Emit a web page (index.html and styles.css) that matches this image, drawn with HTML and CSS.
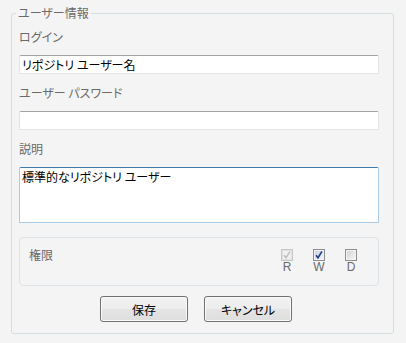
FILE: index.html
```html
<!DOCTYPE html>
<html lang="ja">
<head>
<meta charset="utf-8">
<title>ユーザー情報</title>
<link rel="stylesheet" href="styles.css">
</head>
<body>
<fieldset class="panel">
  <legend class="panel-title">ユーザー情報</legend>
  <div class="field">
    <label class="field-label" for="login">ログイン</label>
    <input class="text-input" id="login" type="text" value="リポジトリ ユーザー名">
  </div>
  <div class="field">
    <label class="field-label" for="pw">ユーザー パスワード</label>
    <input class="text-input" id="pw" type="password" value="">
  </div>
  <div class="field field-last">
    <label class="field-label" for="desc">説明</label>
    <textarea class="text-area" id="desc">標準的なリポジトリ ユーザー</textarea>
  </div>
  <div class="perm-group">
    <span class="perm-label">権限</span>
    <div class="perm-checks">
      <div class="perm-col">
        <svg class="cb" width="12" height="12" viewBox="0 0 12 12">
          <rect x="0.5" y="0.5" width="11" height="11" fill="#f6f6f6" stroke="#c6c6c6"/>
          <rect x="1.5" y="1.5" width="9" height="9" fill="#f0f0f0" stroke="#e2e2e2"/>
          <path d="M3 6.2 L5 8.8 L9 2.6" fill="none" stroke="#bdbdbd" stroke-width="1.5"/>
        </svg>
        <span class="perm-name">R</span>
      </div>
      <div class="perm-col">
        <svg class="cb" width="12" height="12" viewBox="0 0 12 12">
          <defs>
            <linearGradient id="gw" x1="0" y1="0" x2="1" y2="1">
              <stop offset="0" stop-color="#c9d2e4"/>
              <stop offset="1" stop-color="#f2f5fb"/>
            </linearGradient>
          </defs>
          <rect x="0.5" y="0.5" width="11" height="11" fill="#f4f4f4" stroke="#8b8c8e"/>
          <rect x="1.5" y="1.5" width="9" height="9" fill="url(#gw)" stroke="#f2f2f2"/>
          <path d="M3 6.2 L5 8.8 L9 2.4" fill="none" stroke="#2b3f8c" stroke-width="1.7"/>
        </svg>
        <span class="perm-name">W</span>
      </div>
      <div class="perm-col">
        <svg class="cb" width="12" height="12" viewBox="0 0 12 12">
          <defs>
            <linearGradient id="gd" x1="0" y1="0" x2="1" y2="1">
              <stop offset="0" stop-color="#d2d2d2"/>
              <stop offset="1" stop-color="#f6f6f6"/>
            </linearGradient>
          </defs>
          <rect x="0.5" y="0.5" width="11" height="11" fill="#f4f4f4" stroke="#8e8e8e"/>
          <rect x="1.5" y="1.5" width="9" height="9" fill="url(#gd)" stroke="#f4f4f4"/>
        </svg>
        <span class="perm-name">D</span>
      </div>
    </div>
  </div>
  <div class="actions">
    <button class="btn" type="button">保存</button>
    <button class="btn" type="button">キャンセル</button>
  </div>
</fieldset>
</body>
</html>
```

FILE: styles.css
```css
html, body {
  margin: 0;
  padding: 0;
  background: #f4f4f4;
}

body {
  font-family: "Noto Sans CJK JP", "Noto Sans", sans-serif;
  font-size: 12px;
  font-feature-settings: "palt";
  color: #000;
}

.panel {
  box-sizing: border-box;
  width: 383px;
  margin: 6px 0 0 11px;
  padding: 9px 14px 11px 7px;
  border: 1px solid #d3dde4;
  border-radius: 3px;
  min-inline-size: 0;
}

.panel-title {
  margin-left: -3px;
  padding: 0 2px;
  line-height: 14px;
  color: #6a6a6a;
}

.field {
  display: flex;
  flex-direction: column;
  margin-bottom: 11px;
}

.field-last {
  margin-bottom: 14px;
}

.field-label {
  line-height: 16px;
  height: 16px;
  margin-bottom: 10px;
  color: #6a6a6a;
}

.text-input {
  box-sizing: border-box;
  width: 360px;
  height: 19px;
  margin: 0;
  padding: 0 2px;
  border: 1px solid #e1e5ea;
  border-top-color: #a3a3a3;
  border-radius: 2px 2px 0 0;
  background: #fff;
  font: inherit;
  font-feature-settings: "palt";
  color: #000;
  outline: none;
}

.text-area {
  box-sizing: border-box;
  display: block;
  width: 360px;
  height: 56px;
  margin: 0;
  padding: 1px 2px;
  border: 1px solid #a9cce8;
  border-top-color: #3f7cae;
  border-radius: 2px 2px 0 0;
  background: #fff;
  font: inherit;
  font-feature-settings: "palt";
  line-height: 16px;
  color: #000;
  resize: none;
  outline: none;
  overflow: hidden;
}

.perm-group {
  box-sizing: border-box;
  display: flex;
  justify-content: space-between;
  align-items: flex-start;
  width: 360px;
  height: 49px;
  padding: 11px 11px 0 9px;
  border: 1px solid #dbe2e8;
  border-radius: 4px;
}

.perm-label {
  line-height: 16px;
  margin-top: -2px;
  color: #6a6a6a;
}

.perm-checks {
  display: flex;
}

.perm-col {
  width: 32px;
  display: flex;
  flex-direction: column;
  align-items: center;
}

.cb {
  display: block;
}

.perm-name {
  font-family: "Liberation Sans", sans-serif;
  font-size: 12px;
  line-height: 12px;
  margin-top: 0;
  color: #6a6a6a;
}

.actions {
  display: flex;
  justify-content: center;
  gap: 16px;
  margin-top: 10px;
  padding-right: 6px;
}

.btn {
  box-sizing: border-box;
  width: 88px;
  height: 26px;
  margin: 0;
  padding: 0;
  border: 1px solid #707070;
  border-radius: 3px;
  background: linear-gradient(#f2f2f2 0%, #ececec 50%, #e4e4e4 50%, #dedede 100%);
  box-shadow: inset 0 0 0 1px #fbfbfb;
  font: inherit;
  font-feature-settings: "palt";
  color: #000;
}
```
